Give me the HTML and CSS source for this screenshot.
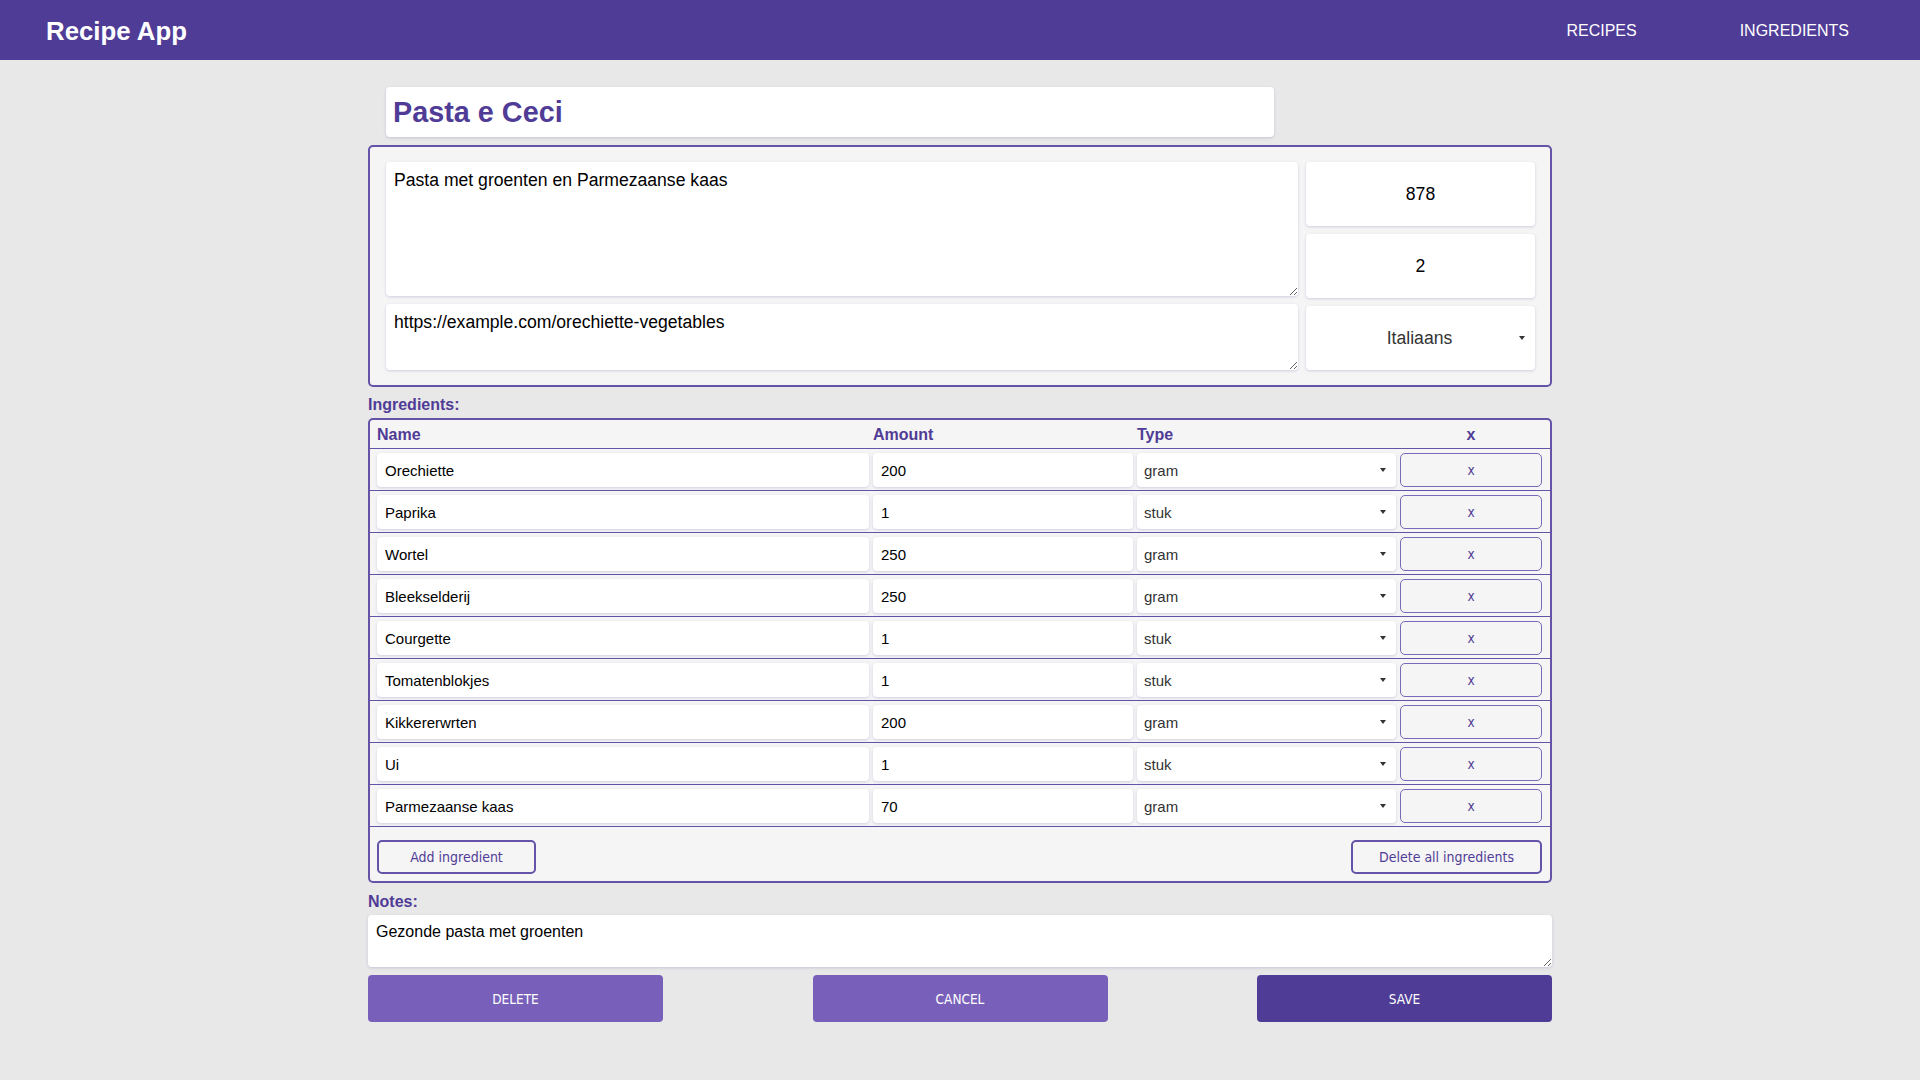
FILE: index.html
```html
<!DOCTYPE html>
<html lang="nl">
<head>
<meta charset="utf-8">
<title>Recipe App</title>
<link rel="stylesheet" href="styles.css">
</head>
<body>
<header class="topbar">
  <div class="brand">Recipe App</div>
  <nav class="nav">
    <a href="#">RECIPES</a>
    <a href="#">INGREDIENTS</a>
  </nav>
</header>
<main class="page">
  <input class="title-input" type="text" value="Pasta e Ceci">
  <div class="details">
    <div class="details-main">
      <textarea class="field desc">Pasta met groenten en Parmezaanse kaas</textarea>
      <textarea class="field url">https://example.com/orechiette-vegetables</textarea>
    </div>
    <div class="details-side">
      <input class="field side" type="text" value="878">
      <input class="field side" type="text" value="2">
      <div class="select-wrap side-wrap"><select class="field side-select"><option>Italiaans</option></select></div>
    </div>
  </div>

  <div class="section-label">Ingredients:</div>
  <div class="ingredients">
    <div class="ing-head">
      <span>Name</span><span>Amount</span><span>Type</span><span class="head-x">x</span>
    </div>
    <div class="ing-row">
      <input class="cell" type="text" value="Orechiette"><input class="cell" type="text" value="200">
      <div class="select-wrap"><select class="cell cell-select"><option>gram</option></select></div><button class="remove">x</button>
    </div>
    <div class="ing-row">
      <input class="cell" type="text" value="Paprika"><input class="cell" type="text" value="1">
      <div class="select-wrap"><select class="cell cell-select"><option>stuk</option></select></div><button class="remove">x</button>
    </div>
    <div class="ing-row">
      <input class="cell" type="text" value="Wortel"><input class="cell" type="text" value="250">
      <div class="select-wrap"><select class="cell cell-select"><option>gram</option></select></div><button class="remove">x</button>
    </div>
    <div class="ing-row">
      <input class="cell" type="text" value="Bleekselderij"><input class="cell" type="text" value="250">
      <div class="select-wrap"><select class="cell cell-select"><option>gram</option></select></div><button class="remove">x</button>
    </div>
    <div class="ing-row">
      <input class="cell" type="text" value="Courgette"><input class="cell" type="text" value="1">
      <div class="select-wrap"><select class="cell cell-select"><option>stuk</option></select></div><button class="remove">x</button>
    </div>
    <div class="ing-row">
      <input class="cell" type="text" value="Tomatenblokjes"><input class="cell" type="text" value="1">
      <div class="select-wrap"><select class="cell cell-select"><option>stuk</option></select></div><button class="remove">x</button>
    </div>
    <div class="ing-row">
      <input class="cell" type="text" value="Kikkererwrten"><input class="cell" type="text" value="200">
      <div class="select-wrap"><select class="cell cell-select"><option>gram</option></select></div><button class="remove">x</button>
    </div>
    <div class="ing-row">
      <input class="cell" type="text" value="Ui"><input class="cell" type="text" value="1">
      <div class="select-wrap"><select class="cell cell-select"><option>stuk</option></select></div><button class="remove">x</button>
    </div>
    <div class="ing-row">
      <input class="cell" type="text" value="Parmezaanse kaas"><input class="cell" type="text" value="70">
      <div class="select-wrap"><select class="cell cell-select"><option>gram</option></select></div><button class="remove">x</button>
    </div>
    <div class="ing-foot">
      <button class="outline-btn add-btn">Add ingredient</button>
      <button class="outline-btn clear-btn">Delete all ingredients</button>
    </div>
  </div>

  <div class="section-label notes-label">Notes:</div>
  <textarea class="field notes">Gezonde pasta met groenten</textarea>

  <div class="actions">
    <button class="action light">DELETE</button>
    <button class="action light">CANCEL</button>
    <button class="action dark">SAVE</button>
  </div>
</main>
</body>
</html>
```
FILE: styles.css
```css
* {
  box-sizing: border-box;
}

body {
  margin: 0;
  background: #e8e8e8;
  font-family: "Liberation Sans", Arial, sans-serif;
  color: #000;
}

.topbar {
  height: 60px;
  background: #4f3c96;
  display: flex;
  align-items: center;
  justify-content: space-between;
  padding: 2px 71px 0 46px;
}

.brand {
  color: #fff;
  font-weight: 700;
  font-size: 25.8px;
}

.nav {
  display: flex;
  gap: 103px;
}

.nav a {
  color: #fff;
  font-size: 16px;
  text-decoration: none;
}

.page {
  width: 1184px;
  margin: 0 auto;
  padding-top: 27px;
}

.title-input {
  display: block;
  width: 888px;
  height: 50px;
  margin-left: 18px;
  border: none;
  outline: none;
  border-radius: 4px;
  background: #fff;
  box-shadow: 0 1px 3px rgba(90, 70, 160, 0.22);
  font-family: "Liberation Sans", Arial, sans-serif;
  font-weight: 700;
  font-size: 28.8px;
  color: #503c96;
  padding: 0 7px;
}

.details {
  margin-top: 8px;
  border: 2px solid #6553a8;
  border-radius: 5px;
  background: #f5f5f5;
  padding: 15px 15px 15px 16px;
  display: grid;
  grid-template-columns: 1fr 229px;
  gap: 8px;
  height: 242px;
}

.details-main,
.details-side {
  display: flex;
  flex-direction: column;
  gap: 8px;
}

.details-main .desc {
  height: 134px;
  flex: none;
}

.details-main .url {
  height: 66px;
  flex: none;
}

.details-side > * {
  height: 64px;
  flex: none;
}

.field {
  border: none;
  outline: none;
  border-radius: 4px;
  background: #fff;
  box-shadow: 0 1px 3px rgba(90, 70, 160, 0.22);
  font-family: "Liberation Sans", Arial, sans-serif;
  font-size: 16px;
  line-height: 18px;
  color: #000;
  padding: 8px;
  width: 100%;
}

.details .field {
  font-size: 17.6px;
  line-height: 20px;
}

.side {
  text-align: center;
}

.select-wrap {
  position: relative;
}

.select-wrap::after {
  content: "";
  position: absolute;
  top: 50%;
  right: 10px;
  margin-top: -2px;
  border-left: 3px solid transparent;
  border-right: 3px solid transparent;
  border-top: 4px solid #333;
  pointer-events: none;
}

.side-select {
  -webkit-appearance: none;
  appearance: none;
  display: block;
  height: 64px;
  text-align: center;
  text-align-last: center;
  color: #333;
  padding: 0 10px 0 8px;
}

.section-label {
  color: #503c96;
  font-weight: 700;
  font-size: 16px;
  line-height: 18px;
  margin: 9px 0 4px;
}

.notes-label {
  margin-top: 10px;
  margin-bottom: 4px;
}

.ingredients {
  border: 2px solid #6553a8;
  border-radius: 5px;
  background: #f5f5f5;
}

.ing-head,
.ing-row {
  display: grid;
  grid-template-columns: 492px 260px 259px 1fr;
  column-gap: 4px;
  padding-left: 7px;
  padding-right: 8px;
  border-bottom: 1px solid #6553a8;
}

.ing-head {
  height: 29px;
  padding-top: 2px;
  align-items: center;
  color: #503c96;
  font-weight: 700;
  font-size: 16px;
}

.head-x {
  text-align: center;
}

.ing-row {
  padding-top: 4px;
  padding-bottom: 3px;
}

.cell {
  display: block;
  height: 34px;
  border: none;
  outline: none;
  border-radius: 4px;
  background: #fff;
  box-shadow: 0 1px 3px rgba(90, 70, 160, 0.22);
  font-family: "Liberation Sans", Arial, sans-serif;
  font-size: 15px;
  color: #000;
  padding: 0 8px;
  width: 100%;
}

.cell-select {
  -webkit-appearance: none;
  appearance: none;
  color: #333;
  padding: 0 20px 0 7px;
}

.remove {
  height: 34px;
  border: 1px solid #7a68b8;
  border-radius: 5px;
  background: #f5f5f5;
  color: #503c96;
  font-family: "DejaVu Sans Condensed", "DejaVu Sans", sans-serif;
  font-size: 13.5px;
  padding: 0;
}

.ing-foot {
  display: flex;
  justify-content: space-between;
  padding: 13px 8px 7px 7px;
}

.outline-btn {
  height: 34px;
  border: 2px solid #6553a8;
  border-radius: 5px;
  background: #f5f5f5;
  color: #503c96;
  font-family: "DejaVu Sans Condensed", "DejaVu Sans", sans-serif;
  font-size: 14px;
  padding: 0;
}

.add-btn {
  width: 159px;
}

.clear-btn {
  width: 191px;
}

.notes {
  display: block;
  height: 52px;
}

.actions {
  display: flex;
  justify-content: space-between;
  margin-top: 8px;
}

.action {
  width: 295px;
  height: 47px;
  border: none;
  border-radius: 4px;
  color: #fff;
  font-family: "DejaVu Sans Condensed", "DejaVu Sans", sans-serif;
  font-size: 13.5px;
}

.action.light {
  background: #7860ba;
}

.action.dark {
  background: #4f3c96;
}
```
